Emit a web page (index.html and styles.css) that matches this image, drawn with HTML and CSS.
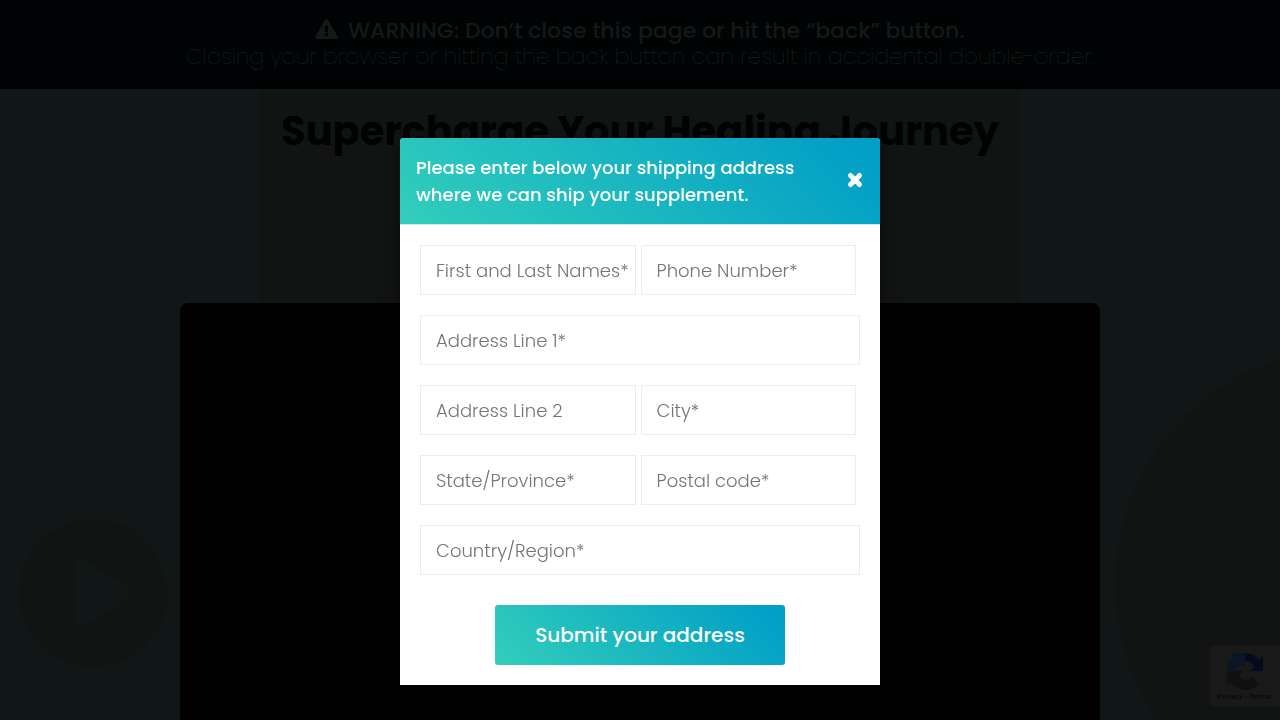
FILE: index.html
```
<!DOCTYPE html>
<html lang="en">
<head>
<meta charset="utf-8">
<title>Supercharge Your Healing Journey</title>
<link rel="stylesheet" href="styles.css">
</head>
<body>
<div class="page">
  <header class="warning">
    <p class="warning-title">
      <svg class="warning-icon" viewBox="0 0 576 512" aria-hidden="true"><path d="M569.5 440c18.500 32-4.700 72-41.600 72H48.100c-36.900 0-60-40-41.600-72L246.400 24c18.500-32 64.700-32 83.200 0l239.900 416zM288 354a46 46 0 1 0 0 92 46 46 0 0 0 0-92zm-43.700-165.300 7.400 136c.3 6.400 5.600 11.300 12 11.300h48.600c6.400 0 11.700-4.900 12-11.300l7.400-136c.4-6.900-5.100-12.700-12-12.700h-63.400c-6.900 0-12.400 5.800-12 12.700z"/></svg>
      WARNING: Don’t close this page or hit the “back” button.
    </p>
    <p class="warning-text">Closing your browser or hitting the back button can result in accidental double-order.</p>
  </header>
  <main class="content">
    <h1 class="headline">Supercharge Your Healing Journey</h1>
    <div class="video"></div>
  </main>
  <svg class="play-mark" viewBox="0 0 150 150" aria-hidden="true"><circle cx="75" cy="75" r="75"/><path class="play-cut" d="M56 50v50c0 7 6 10 12 7l42-25c5-3 5-11 0-14L68 43c-6-4-12 0-12 7z"/></svg>
  <aside class="recaptcha">
    <svg class="recaptcha-logo" viewBox="0 0 38 38" aria-hidden="true">
      <path fill="#050a1d" d="M19 1c6 0 11 3 14 7l4-4v15H24l4-4c-2-4-5-6-9-6z"/>
      <path fill="#0a1527" d="M19 1H4l4 4C3 8 1 13 1 19h9c0-4 2-6 5-7l4 4z"/>
      <path fill="#101010" d="M1 19v15l4-4c7 10 21 10 28 2l-7-7c-4 5-11 3-13-2l4-4z"/>
    </svg>
    <span>Privacy - Terms</span>
  </aside>
</div>
<div class="overlay">
  <section class="modal" role="dialog" aria-modal="true" aria-labelledby="modal-title">
    <div class="modal-head">
      <h2 class="modal-title" id="modal-title">Please enter below your shipping address where we can ship your supplement.</h2>
      <button class="close" type="button" aria-label="Close"><svg viewBox="0 0 18 18" aria-hidden="true"><path d="M4.500 4.500l9 9M13.500 4.500l-9 9"/></svg></button>
    </div>
    <form class="form">
      <div class="pair">
        <input class="field" type="text" aria-label="First and Last Names" placeholder="First and Last Names*">
        <input class="field" type="tel" aria-label="Phone Number" placeholder="Phone Number*">
      </div>
      <input class="field" type="text" aria-label="Address Line 1" placeholder="Address Line 1*">
      <div class="pair">
        <input class="field" type="text" aria-label="Address Line 2" placeholder="Address Line 2">
        <input class="field" type="text" aria-label="City" placeholder="City*">
      </div>
      <div class="pair">
        <input class="field" type="text" aria-label="State/Province" placeholder="State/Province*">
        <input class="field" type="text" aria-label="Postal code" placeholder="Postal code*">
      </div>
      <input class="field" type="text" aria-label="Country/Region" placeholder="Country/Region*">
      <button class="submit" type="submit">Submit your address</button>
    </form>
  </section>
</div>
</body>
</html>
```
FILE: styles.css
```
* { box-sizing: border-box; }
body {
  margin: 0;
  font-family: Poppins, Inter, "Open Sans", sans-serif;
  background: #111617;
}
.page {
  position: relative;
  display: flex;
  flex-direction: column;
  height: 100vh;
  overflow: hidden;
  background:
    radial-gradient(circle 237px at calc(100% + 70px) 584px, #121413 99%, transparent 100%),
    linear-gradient(#121413, #121413) calc(50% - 2px) / 760px 100% no-repeat,
    #111617;
}
.warning {
  padding: 18px 16px 19px;
  background: #000304;
  color: #171717;
  text-align: center;
  font-size: 22px;
  line-height: 26px;
}
.warning p { margin: 0; }
.warning-title { font-weight: 500; }
.warning-icon {
  width: 23px;
  height: 20px;
  margin-right: 4px;
  vertical-align: -1px;
  fill: #171717;
}
.warning-text {
  color: #262626;
  font-weight: 200;
}
.content {
  flex: 1;
  display: flex;
  flex-direction: column;
  align-items: center;
}
.headline {
  margin: 16px 0 0;
  color: #000304;
  font-size: 40px;
  line-height: 52px;
  font-weight: 700;
}
.video {
  flex: 1;
  width: 100%;
  max-width: 920px;
  margin-top: 146px;
  border-radius: 8px 8px 0 0;
  background: #020202;
}
.play-mark {
  position: absolute;
  left: 19px;
  bottom: 53px;
  width: 148px;
  fill: #121413;
}
.play-cut { fill: #111617; }
.recaptcha {
  position: absolute;
  right: 0;
  bottom: 14px;
  width: 70px;
  height: 60px;
  padding: 6px 0 0 7px;
  overflow: hidden;
  border-radius: 3px 0 0 3px;
  background: #191919;
  color: #040404;
  font: 8px/14px Roboto, sans-serif;
  white-space: nowrap;
}
.recaptcha-logo {
  display: block;
  width: 38px;
  margin-left: 9px;
}
.overlay {
  position: fixed;
  inset: 0;
  display: flex;
  align-items: flex-start;
  justify-content: center;
  padding-top: 138px;
}
.modal {
  width: 480px;
  max-width: 100%;
  border-radius: 4px 4px 0 0;
  background: #fff;
  box-shadow: 0 5px 15px rgba(0, 0, 0, .5);
}
.modal-head {
  display: flex;
  align-items: center;
  justify-content: space-between;
  padding: 16px;
  border-bottom: 1px solid #dee2e6;
  border-radius: 4px 4px 0 0;
  background: linear-gradient(45deg, #33cebb, #009fc6 95%) padding-box;
  color: #fff;
}
.modal-title {
  max-width: 400px;
  margin: 0;
  font-size: 18px;
  line-height: 27px;
  font-weight: 500;
}
.close {
  padding: 0 0 3px;
  border: 0;
  background: none;
}
.close svg {
  display: block;
  width: 18px;
  fill: none;
  stroke: #fff;
  stroke-width: 5;
  stroke-linecap: round;
}
.form {
  display: flex;
  flex-direction: column;
  gap: 20px;
  padding: 20px;
}
.pair {
  display: grid;
  grid-template-columns: 1fr 1fr;
  gap: 5px;
  padding-right: 4px;
}
.field {
  width: 100%;
  min-width: 0;
  height: 50px;
  padding: 0 0 0 15px;
  border: 1px solid #ececec;
  background: #fff;
  font: 300 18px Poppins, Inter, "Open Sans", sans-serif;
}
.field::placeholder { color: #757575; }
.submit {
  align-self: center;
  height: 60px;
  margin-top: 10px;
  padding: 0 40px;
  border: 0;
  border-radius: 3px;
  background: linear-gradient(45deg, #33cebb, #009fc6 95%);
  color: #fff;
  font: 500 20px Poppins, Inter, "Open Sans", sans-serif;
}
```
